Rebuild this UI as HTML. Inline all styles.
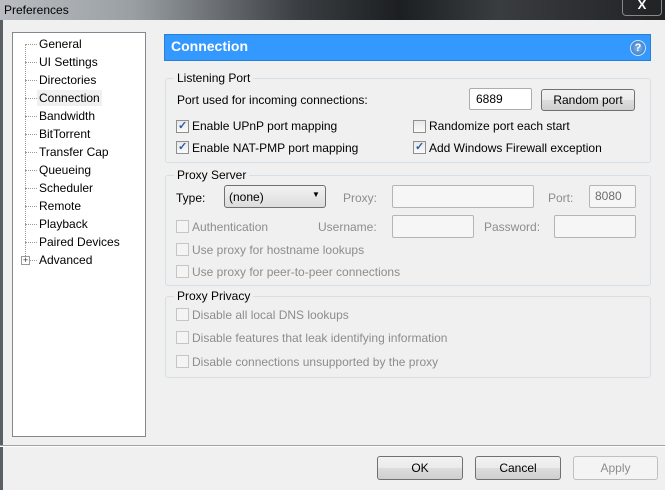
<!DOCTYPE html>
<html><head><meta charset="utf-8"><style>
*{margin:0;padding:0;box-sizing:border-box}
body{width:665px;height:490px;overflow:hidden;background:#f0f0f0;font-family:"Liberation Sans",sans-serif;font-size:12px;color:#000;position:relative}
.a{position:absolute;white-space:nowrap}
#title{left:0;top:0;width:665px;height:20px;background:linear-gradient(90deg,#b9bdc1 0,#9a9fa4 20%,#3a3e42 45%,#1c1f22 60%,#3a3d40 75%,#202224 100%)}
#frame{left:0;top:20px;width:665px;height:470px;border-left:3px solid #5a5f64;background:#f0f0f0}
#tree{left:12px;top:32px;width:134px;height:405px;background:#fff;border:1px solid #828790}
.ti{position:absolute;left:26px;font-size:12px}
.dot{position:absolute;left:12px;width:12px;border-top:1px dotted #999}
.grp{position:absolute;border:1px solid #d5dfe5;border-radius:3px}
.gl{position:absolute;background:#f0f0f0;padding:0 3px;top:-8px;left:8px}
.cb{position:absolute;width:13px;height:13px;border:1px solid #8f8f8f;background:linear-gradient(#e8e8e8,#fafafa)}
.cb.c::after{content:"✓";position:absolute;left:1px;top:-2px;font-size:11px;color:#2d5aa8;font-weight:bold}
.cb.d{border-color:#c5c5c5;background:#f4f4f4}
.gray{color:#8d8d8d}
.tb{position:absolute;border:1px solid #b5b5b5;background:#f6f6f6;border-radius:2px}
.btn{position:absolute;border:1px solid #707070;border-radius:3px;background:linear-gradient(#f2f2f2 0,#ebebeb 50%,#dddddd 51%,#cfcfcf 100%);text-align:center}
</style></head><body>
<div id="title" class="a"></div>
<div class="a" style="left:4px;top:3px;color:#000;font-size:12px">Preferences</div>
<div class="a" style="left:622px;top:-3px;width:40px;height:19px;border:1px solid #888;border-top:none;border-radius:0 0 4px 4px;color:#fff;text-align:center;font-weight:bold;font-size:13px;line-height:16px">X</div>
<div id="frame" class="a"></div>
<div id="tree" class="a">
 <div style="position:absolute;left:12px;top:11px;height:218px;border-left:1px dotted #999"></div>
 <div class="dot" style="top:11px"></div><div class="ti" style="top:4px">General</div>
 <div class="dot" style="top:29px"></div><div class="ti" style="top:22px">UI Settings</div>
 <div class="dot" style="top:47px"></div><div class="ti" style="top:40px">Directories</div>
 <div class="dot" style="top:65px"></div><div class="ti" style="top:57px;background:#f0f0f0;left:24px;padding:1px 2px">Connection</div>
 <div class="dot" style="top:83px"></div><div class="ti" style="top:76px">Bandwidth</div>
 <div class="dot" style="top:101px"></div><div class="ti" style="top:94px">BitTorrent</div>
 <div class="dot" style="top:119px"></div><div class="ti" style="top:112px">Transfer Cap</div>
 <div class="dot" style="top:137px"></div><div class="ti" style="top:130px">Queueing</div>
 <div class="dot" style="top:155px"></div><div class="ti" style="top:148px">Scheduler</div>
 <div class="dot" style="top:173px"></div><div class="ti" style="top:166px">Remote</div>
 <div class="dot" style="top:191px"></div><div class="ti" style="top:184px">Playback</div>
 <div class="dot" style="top:209px"></div><div class="ti" style="top:202px">Paired Devices</div>
 <div class="dot" style="top:227px"></div><div class="ti" style="top:220px">Advanced</div>
 <div style="position:absolute;left:8px;top:223px;width:9px;height:9px;border:1px solid #999;background:#fff;font-size:9px;line-height:7px;text-align:center;color:#333">+</div>
</div>
<div class="a" style="left:164px;top:34px;width:487px;height:27px;background:#3399ff;border:1px solid #2a7fd4"></div>
<div class="a" style="left:171px;top:38px;color:#fff;font-weight:bold;font-size:14px">Connection</div>
<div class="a" style="left:630px;top:40px;width:16px;height:16px;border-radius:50%;background:radial-gradient(#7fb8f0,#2d6fc0);border:1px solid #cfe3f8;color:#fff;font-size:11px;text-align:center;line-height:14px;font-weight:bold">?</div>

<div class="grp" style="left:165px;top:78px;width:486px;height:85px"><div class="gl">Listening Port</div></div>
<div class="a" style="left:177px;top:93px">Port used for incoming connections:</div>
<div class="tb" style="left:469px;top:88px;width:63px;height:22px;background:#fff;border-color:#abadb3"></div>
<div class="a" style="left:476px;top:92px">6889</div>
<div class="btn" style="left:541px;top:89px;width:94px;height:22px;line-height:20px">Random port</div>
<div class="cb c" style="left:176px;top:120px"></div><div class="a" style="left:192px;top:119px">Enable UPnP port mapping</div>
<div class="cb c" style="left:176px;top:141px"></div><div class="a" style="left:192px;top:141px">Enable NAT-PMP port mapping</div>
<div class="cb" style="left:413px;top:120px"></div><div class="a" style="left:429px;top:119px">Randomize port each start</div>
<div class="cb c" style="left:413px;top:141px"></div><div class="a" style="left:429px;top:141px">Add Windows Firewall exception</div>

<div class="grp" style="left:165px;top:175px;width:486px;height:111px"><div class="gl">Proxy Server</div></div>
<div class="a" style="left:176px;top:191px">Type:</div>
<div class="a" style="left:224px;top:185px;width:102px;height:23px;border:1px solid #707070;border-radius:3px;background:linear-gradient(#f2f2f2,#dcdcdc)"></div>
<div class="a" style="left:229px;top:190px">(none)</div>
<div class="a" style="left:312px;top:190px;font-size:8px">▼</div>
<div class="a gray" style="left:343px;top:191px">Proxy:</div>
<div class="tb" style="left:392px;top:185px;width:142px;height:23px"></div>
<div class="a gray" style="left:548px;top:191px">Port:</div>
<div class="tb" style="left:589px;top:185px;width:47px;height:23px"></div>
<div class="a gray" style="left:595px;top:189px;color:#6d6d6d">8080</div>
<div class="cb d" style="left:176px;top:220px"></div><div class="a gray" style="left:192px;top:220px">Authentication</div>
<div class="a gray" style="left:318px;top:220px">Username:</div>
<div class="tb" style="left:392px;top:215px;width:82px;height:23px"></div>
<div class="a gray" style="left:484px;top:220px">Password:</div>
<div class="tb" style="left:554px;top:215px;width:82px;height:23px"></div>
<div class="cb d" style="left:176px;top:243px"></div><div class="a gray" style="left:192px;top:243px">Use proxy for hostname lookups</div>
<div class="cb d" style="left:176px;top:265px"></div><div class="a gray" style="left:192px;top:265px">Use proxy for peer-to-peer connections</div>

<div class="grp" style="left:165px;top:296px;width:486px;height:82px"><div class="gl">Proxy Privacy</div></div>
<div class="cb d" style="left:176px;top:308px"></div><div class="a gray" style="left:192px;top:308px">Disable all local DNS lookups</div>
<div class="cb d" style="left:176px;top:331px"></div><div class="a gray" style="left:192px;top:331px">Disable features that leak identifying information</div>
<div class="cb d" style="left:176px;top:355px"></div><div class="a gray" style="left:192px;top:355px">Disable connections unsupported by the proxy</div>

<div class="a" style="left:0;top:445px;width:665px;border-top:1px solid #a0a0a0;border-bottom:1px solid #fff"></div>
<div class="btn" style="left:377px;top:456px;width:86px;height:24px;line-height:22px">OK</div>
<div class="btn" style="left:475px;top:456px;width:86px;height:24px;line-height:22px">Cancel</div>
<div class="btn gray" style="left:573px;top:456px;width:85px;height:24px;line-height:22px;border-color:#c0c0c0;background:#f4f4f4">Apply</div>
</body></html>
